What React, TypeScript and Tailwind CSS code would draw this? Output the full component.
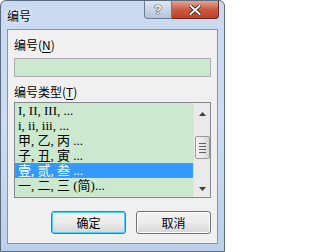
import React from "react";

const items = [
  "I, II, III, ...",
  "i, ii, iii, ...",
  "甲, 乙, 丙 ...",
  "子, 丑, 寅 ...",
  "壹, 贰, 叁 ...",
  "一, 二, 三 (简)...",
];

export default function App() {
  const ui = { fontFamily: "'Noto Sans CJK SC', 'Liberation Sans', sans-serif" };
  const list = { fontFamily: "'Liberation Serif', 'Noto Sans CJK SC', serif" };
  return (
    <div className="w-[226px] h-[252px] bg-white">
      <div className="relative w-[225px] h-[252px] flex flex-col rounded-t-[6px] border border-[#5a6b80] bg-gradient-to-b from-[#c9d9ef] via-[#cddcf1] to-[#bcd0ea]" style={ui}>
        {/* title bar */}
        <div className="h-[28px] flex items-start shrink-0">
          <div className="pl-[6px] pt-[7px] text-[12px] leading-[16px] text-black [text-shadow:0_0_6px_#fff,0_0_3px_#fff]">编号</div>
          <div className="ml-auto mr-[5px] flex h-[18px]">
            <div className="w-[28px] h-[18px] rounded-bl-[4px] border border-[#6d7c91] border-t-0 bg-gradient-to-b from-[#dde7f3] via-[#c8d6e7] to-[#b3c4da] flex items-center justify-center">
              <span className="text-[13px] leading-none font-bold text-white [text-shadow:0_0_1px_#333,0_0_1px_#333,0_0_1px_#333]" style={{ fontFamily: "'Liberation Sans', sans-serif" }}>?</span>
            </div>
            <div className="w-[47px] h-[18px] rounded-br-[4px] border border-[#6b2a22] border-t-0 border-l-0 bg-gradient-to-b from-[#e4a493] via-[#cb5a42] to-[#c23f26] flex items-center justify-center">
              <svg width="12" height="10" viewBox="0 0 12 10">
                <path d="M1.5 1 L10.5 9 M10.5 1 L1.5 9" stroke="#3b1410" strokeWidth="3.6" strokeLinecap="square" />
                <path d="M1.5 1 L10.5 9 M10.5 1 L1.5 9" stroke="#ffffff" strokeWidth="2" strokeLinecap="square" />
              </svg>
            </div>
          </div>
        </div>
        {/* client area */}
        <div className="mx-[6px] mb-[7px] flex-1 border border-[#8596ab] bg-[#f0f0f0] px-[6px] flex flex-col">
          <div className="mt-[7px] h-[16px] text-[12px] leading-[16px] text-black">
            编号(<span className="underline underline-offset-2">N</span>)
          </div>
          <div className="mt-[5px] h-[19px] border border-[#abadb3] bg-[#cce8cf]" />
          <div className="mt-[7px] h-[16px] text-[12px] leading-[16px] text-black">
            编号类型(<span className="underline underline-offset-2">T</span>)
          </div>
          <div className="mt-[2px] h-[96px] border border-[#828790] bg-[#cce8cf] flex">
            <div className="flex-1 flex flex-col" style={list}>
              {items.map((t, i) =>
                i === 4 ? (
                  <div key={i} className="h-[15px] text-[13px] leading-[13px] pl-[2px] bg-[#3399ff] text-white border border-dotted border-[#e07a2a] whitespace-nowrap">
                    {t}
                  </div>
                ) : (
                  <div key={i} className="h-[15px] text-[13px] leading-[15px] pl-[3px] text-black whitespace-nowrap">
                    {t}
                  </div>
                )
              )}
            </div>
            <div className="w-[17px] bg-[#eaeaea] border-l border-[#e0e0e0] flex flex-col items-center">
              <div className="h-[17px] flex items-center justify-center mt-[2px]">
                <svg width="7" height="4" viewBox="0 0 7 4"><path d="M3.5 0 L7 4 L0 4 Z" fill="#404040" /></svg>
              </div>
              <div className="mt-[14px] w-[15px] h-[23px] rounded-[2px] border border-[#9a9a9a] bg-gradient-to-r from-[#f4f4f4] via-[#e8e8e8] to-[#d6d6d6] flex flex-col items-center justify-center gap-[2px]">
                <div className="w-[7px] h-[1px] bg-[#606060]" />
                <div className="w-[7px] h-[1px] bg-[#606060]" />
                <div className="w-[7px] h-[1px] bg-[#606060]" />
                <div className="w-[7px] h-[1px] bg-[#606060]" />
              </div>
              <div className="mt-auto mb-[6px] flex items-center justify-center">
                <svg width="7" height="4" viewBox="0 0 7 4"><path d="M0 0 L7 0 L3.5 4 Z" fill="#404040" /></svg>
              </div>
            </div>
          </div>
          <div className="mt-[13px] flex justify-end gap-[10px]">
            <div className="w-[75px] h-[23px] rounded-[3px] border border-[#3c7fb1] shadow-[inset_0_0_0_1px_#48d2ff] bg-gradient-to-b from-[#f2f2f2] via-[#ebebeb] to-[#d6d6d6] flex items-center justify-center text-[12px] text-black">
              确定
            </div>
            <div className="w-[75px] h-[23px] rounded-[3px] border border-[#707070] shadow-[inset_0_0_0_1px_#fcfcfc] bg-gradient-to-b from-[#f2f2f2] via-[#ebebeb] to-[#d6d6d6] flex items-center justify-center text-[12px] text-black">
              取消
            </div>
          </div>
        </div>
      </div>
    </div>
  );
}
